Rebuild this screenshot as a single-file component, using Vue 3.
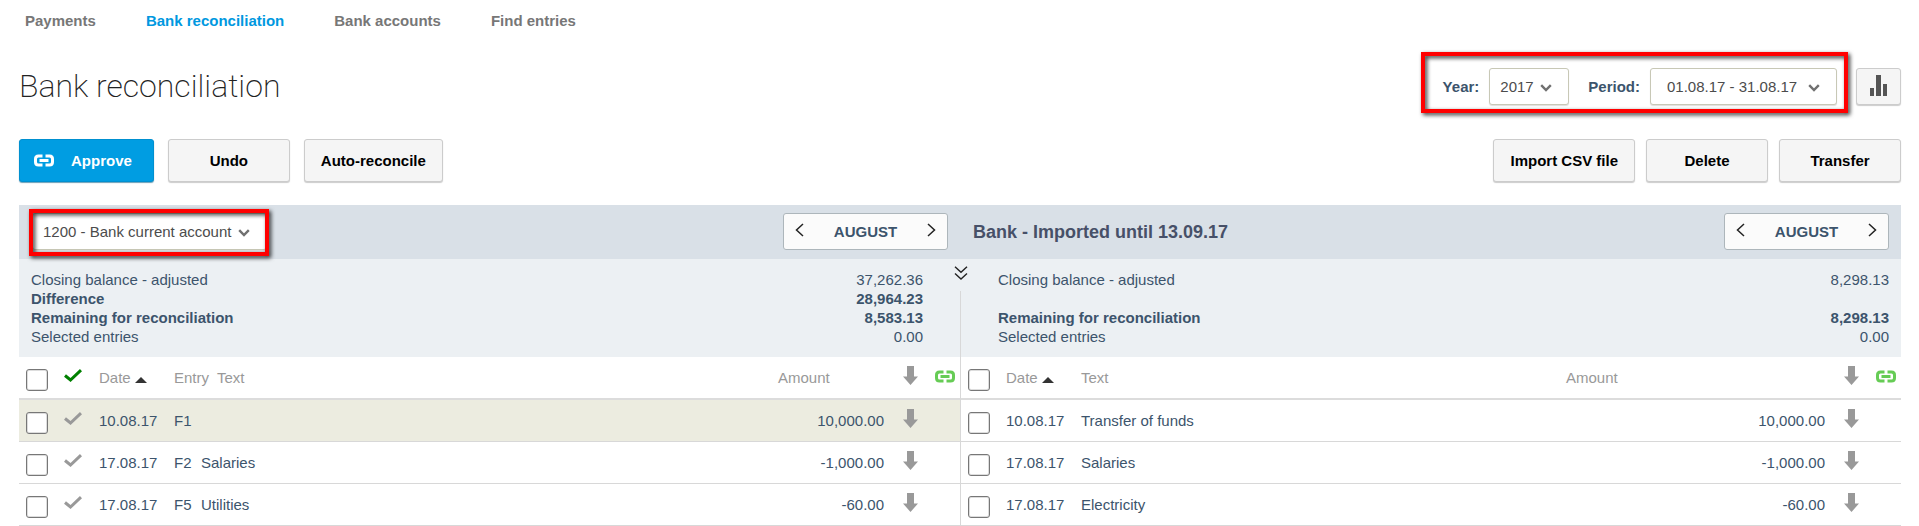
<template>
  <div class="page">
    <nav class="tabs">
      <a v-for="tab in tabs" :key="tab" href="#" :class="{ active: tab === activeTab }" @click.prevent="activeTab = tab">{{ tab }}</a>
    </nav>

    <header class="title_row">
      <h1>Bank reconciliation</h1>
      <div class="title_tools">
        <div class="filters marked">
          <label for="year">Year:</label>
          <span class="select_box">
            <select id="year" v-model="year">
              <option>2017</option>
            </select>
            <svg class="caret" viewBox="0 0 12 8"><path d="M1.2 1.2 6 6l4.800-4.800" /></svg>
          </span>
          <label for="period" class="period_label">Period:</label>
          <span class="select_box wide">
            <select id="period" v-model="period">
              <option>01.08.17 - 31.08.17</option>
            </select>
            <svg class="caret" viewBox="0 0 12 8"><path d="M1.2 1.2 6 6l4.800-4.800" /></svg>
          </span>
        </div>
        <button class="chart_btn" type="button" aria-label="Chart">
          <svg viewBox="0 0 18 21"><path d="M0 13h4v8H0zM6 0h5v21H6zM13 9h4v12h-4z" /></svg>
        </button>
      </div>
    </header>

    <div class="actions">
      <div class="actions_left">
        <button class="btn primary" type="button">
          <svg class="link_icon" viewBox="0 0 20 13">
            <path d="M8.500 2H4.500Q1.500 2 1.500 5v3q0 3 3 3h4M11.500 2h4q3 0 3 3v3q0 3-3 3h-4M5.500 6.500h9" />
          </svg>
          Approve
        </button>
        <button class="btn" type="button">Undo</button>
        <button class="btn" type="button">Auto-reconcile</button>
      </div>
      <div class="actions_right">
        <button class="btn" type="button">Import CSV file</button>
        <button class="btn" type="button">Delete</button>
        <button class="btn" type="button">Transfer</button>
      </div>
    </div>

    <main class="panes">
      <section v-for="pane in panes" :key="pane.id" class="pane" :class="pane.id">
        <div class="pane_head">
          <span v-if="pane.id === 'ledger'" class="select_box marked">
            <select v-model="account" aria-label="Account">
              <option>1200 - Bank current account</option>
            </select>
            <svg class="caret" viewBox="0 0 12 8"><path d="M1.2 1.2 6 6l4.800-4.800" /></svg>
          </span>
          <h2 v-else>Bank - Imported until 13.09.17</h2>
          <div class="pager">
            <button type="button" aria-label="Previous month">
              <svg viewBox="0 0 9 14"><path d="M8 1 1.500 7 8 13" /></svg>
            </button>
            <span>AUGUST</span>
            <button type="button" aria-label="Next month">
              <svg viewBox="0 0 9 14"><path d="M1 1l6.500 6L1 13" /></svg>
            </button>
          </div>
        </div>

        <div class="pane_body">
          <dl class="summary">
            <div v-for="(line, index) in pane.summary" :key="index" :class="{ strong: line.strong }">
              <dt>{{ line.label }}</dt>
              <dd>{{ line.value }}</dd>
            </div>
          </dl>

          <table>
            <colgroup>
              <col class="col_check">
              <col v-if="pane.id === 'ledger'" class="col_tick">
              <col class="col_date">
              <col v-if="pane.id === 'ledger'" class="col_entry">
              <col>
              <col class="col_amount">
              <col class="col_icon">
              <col class="col_icon">
            </colgroup>
            <thead>
              <tr>
                <th><input type="checkbox" aria-label="Select all"></th>
                <th v-if="pane.id === 'ledger'">
                  <svg class="tick approved" viewBox="0 0 18 13"><path d="M1 6.500 6.500 11 17 1.200" /></svg>
                </th>
                <th>
                  Date
                  <svg class="sort" viewBox="0 0 12 6"><path d="M0 6 6 0l6 6z" /></svg>
                </th>
                <th v-if="pane.id === 'ledger'" colspan="2"><span class="entry_title">Entry</span>Text</th>
                <th v-else>Text</th>
                <th>Amount</th>
                <th><svg class="arrow" viewBox="0 0 15 19"><path d="M4 0h7v10.500h4L7.500 19 0 10.500h4z" /></svg></th>
                <th>
                  <svg class="link_icon" viewBox="0 0 20 13">
                    <path d="M8.500 2H4.500Q1.500 2 1.500 5v3q0 3 3 3h4M11.500 2h4q3 0 3 3v3q0 3-3 3h-4M5.500 6.500h9" />
                  </svg>
                </th>
              </tr>
            </thead>
            <tbody>
              <tr v-for="(row, index) in pane.rows" :key="index" :class="{ current: row.current }">
                <td><input v-model="row.checked" type="checkbox" :aria-label="'Select ' + row.date + ' ' + row.amount"></td>
                <td v-if="pane.id === 'ledger'">
                  <svg class="tick" viewBox="0 0 18 13"><path d="M1 6.500 6.500 11 17 1.200" /></svg>
                </td>
                <td>{{ row.date }}</td>
                <td v-if="pane.id === 'ledger'">{{ row.entry }}</td>
                <td>{{ row.text }}</td>
                <td class="amount">{{ row.amount }}</td>
                <td><svg class="arrow" viewBox="0 0 15 19"><path d="M4 0h7v10.500h4L7.500 19 0 10.500h4z" /></svg></td>
                <td></td>
              </tr>
            </tbody>
          </table>
        </div>
      </section>

      <button class="collapse" type="button" aria-label="Toggle summary">
        <svg viewBox="0 0 14 14"><path d="M1 .800 7 6.300l6-5.500M1 7.500 7 13l6-5.500" /></svg>
      </button>
    </main>
  </div>
</template>

<script setup>
import {ref} from "vue";

const tabs = ['Payments', 'Bank reconciliation', 'Bank accounts', 'Find entries']
const activeTab = ref('Bank reconciliation')

const year = ref('2017')
const period = ref('01.08.17 - 31.08.17')
const account = ref('1200 - Bank current account')

const panes = ref([
  {
    id: 'ledger',
    summary: [
      {label: 'Closing balance - adjusted', value: '37,262.36'},
      {label: 'Difference', value: '28,964.23', strong: true},
      {label: 'Remaining for reconciliation', value: '8,583.13', strong: true},
      {label: 'Selected entries', value: '0.00'}
    ],
    rows: [
      {date: '10.08.17', entry: 'F1', text: '', amount: '10,000.00', current: true, checked: false},
      {date: '17.08.17', entry: 'F2', text: 'Salaries', amount: '-1,000.00', checked: false},
      {date: '17.08.17', entry: 'F5', text: 'Utilities', amount: '-60.00', checked: false}
    ]
  },
  {
    id: 'bank',
    // the second line stays empty so both summaries line up
    summary: [
      {label: 'Closing balance - adjusted', value: '8,298.13'},
      {label: '', value: ''},
      {label: 'Remaining for reconciliation', value: '8,298.13', strong: true},
      {label: 'Selected entries', value: '0.00'}
    ],
    rows: [
      {date: '10.08.17', text: 'Transfer of funds', amount: '10,000.00', checked: false},
      {date: '17.08.17', text: 'Salaries', amount: '-1,000.00', checked: false},
      {date: '17.08.17', text: 'Electricity', amount: '-60.00', checked: false}
    ]
  }
])
</script>

<style>
body {
  background: #fff;
}
</style>

<style scoped>
.page {
  padding: 11px 18px 0 19px;
  font-family: "Liberation Sans", Arial, sans-serif;
  font-size: 15px;
  line-height: 19px;
  color: #3c546c;
}
.page * {
  box-sizing: border-box;
}
button,
select {
  font: inherit;
}
svg {
  display: block;
}

.tabs {
  display: flex;
  gap: 50px;
  padding-left: 6px;
  font-weight: bold;
}
.tabs a {
  color: #777;
  text-decoration: none;
}
.tabs a.active {
  color: #0098e0;
}

.title_row {
  display: flex;
  justify-content: space-between;
  align-items: center;
  margin-top: 38px;
}
h1 {
  margin: 0;
  font-family: Roboto, "Open Sans", sans-serif;
  font-size: 32px;
  line-height: 37px;
  font-weight: 200;
  color: #222;
}
.title_tools {
  display: flex;
  gap: 19px;
}
.filters {
  display: flex;
  align-items: center;
}
.filters label {
  margin-right: 10px;
  font-weight: bold;
}
.filters .period_label {
  margin-left: 19px;
}

.select_box {
  position: relative;
  display: block;
}
.select_box select {
  display: block;
  height: 37px;
  padding: 0 34px 0 10px;
  appearance: none;
  color: #4c4c4c;
  background: #fff;
  border: 1px solid #c8c8b6;
  border-radius: 3px;
  box-shadow: 0 1px 1px #ddd;
}
.select_box.wide select {
  padding: 0 38px 0 16px;
}
.caret {
  position: absolute;
  top: 16px;
  right: 17px;
  width: 12px;
  height: 8px;
  fill: none;
  stroke: #707070;
  stroke-width: 2.4;
  pointer-events: none;
}

/* red frame drawn over a group of controls */
.marked {
  position: relative;
}
.marked::after {
  content: "";
  position: absolute;
  border: 4px solid #f00;
  filter: drop-shadow(2px 2px 2px rgba(0, 0, 0, 0.8));
  pointer-events: none;
}
.filters.marked::after {
  inset: -16px -11px -8px -22px;
}
.select_box.marked::after {
  inset: -4px -2px -6px -3px;
}

.chart_btn {
  display: flex;
  align-items: center;
  justify-content: center;
  width: 45px;
  height: 37px;
  padding: 0 0 2px;
  background: #f5f5f5;
  border: 1px solid #ccc;
  border-radius: 3px;
  box-shadow: 0 1px 1px #ccc;
}
.chart_btn svg {
  width: 18px;
  height: 21px;
  fill: #555;
}

.actions {
  display: flex;
  justify-content: space-between;
  margin-top: 34px;
}
.actions_left {
  display: flex;
  gap: 14px;
}
.actions_right {
  display: flex;
  gap: 11px;
}
.btn {
  min-width: 122px;
  height: 43px;
  padding: 0 16px;
  font-weight: bold;
  color: #000;
  background: #f5f5f5;
  border: 1px solid #ccc;
  border-radius: 3px;
  box-shadow: 0 1px 1px #ccc;
}
.btn.primary {
  display: flex;
  align-items: center;
  gap: 17px;
  padding: 0 21px 0 14px;
  color: #fff;
  background: #009de2;
  border-color: #0090d0;
  box-shadow: 0 1px 1px #6a9fb8;
}

.link_icon {
  width: 20px;
  height: 13px;
  fill: none;
  stroke: #6c5;
  stroke-width: 3;
}
.primary .link_icon {
  stroke: #fff;
}

.panes {
  position: relative;
  display: flex;
  margin-top: 23px;
}
.pane {
  flex: 1;
  min-width: 0;
}
.pane_head {
  display: flex;
  align-items: center;
  justify-content: space-between;
  padding: 8px 12px 9px 13px;
  background: #d9e0e7;
}
h2 {
  margin: 0;
  font-size: 18px;
  line-height: 22px;
  font-weight: bold;
  color: #475068;
}
.pager {
  display: flex;
  align-items: center;
  justify-content: space-between;
  width: 165px;
  height: 37px;
  font-weight: bold;
  background: #fbfbfb;
  border: 1px solid #adb6bb;
  border-radius: 3px;
}
.pager button {
  height: 35px;
  padding: 0 11px 4px;
  background: none;
  border: 0;
}
.pager svg {
  width: 9px;
  height: 14px;
  fill: none;
  stroke: #222;
  stroke-width: 1.5;
}

.bank .pane_body {
  border-left: 1px solid #d8d8d8;
}
.summary {
  margin: 0;
  padding: 11px 37px 11px 12px;
  background: #ecf0f3;
}
.bank .summary {
  padding: 11px 12px 11px 37px;
}
.summary div {
  display: flex;
  justify-content: space-between;
  height: 19px;
}
.summary .strong {
  font-weight: bold;
}
.summary dd {
  margin: 0;
}
.collapse {
  position: absolute;
  top: 54px;
  left: 50%;
  width: 28px;
  height: 32px;
  margin-left: -13px;
  padding: 0 7px 4px;
  background: #ecf0f3;
  border: 0;
}
.collapse svg {
  width: 14px;
  height: 14px;
  fill: none;
  stroke: #222;
  stroke-width: 1.4;
}

table {
  width: 100%;
  table-layout: fixed;
  border-collapse: separate;
  border-spacing: 0;
}
.col_check {
  width: 38px;
}
.col_tick {
  width: 35px;
}
.col_date {
  width: 75px;
}
.col_entry {
  width: 27px;
}
.col_amount {
  width: 125px;
}
.bank .col_amount {
  width: 278px;
}
.col_icon {
  width: 32px;
}
th,
td {
  height: 42px;
  padding: 0 0 0 7px;
  text-align: left;
  vertical-align: middle;
  white-space: nowrap;
  border-bottom: 1px solid #d8d8d8;
}
th {
  height: 43px;
  font-weight: normal;
  color: #999;
  border-bottom: 2px solid #dcdcdc;
}
.current td {
  background: #ecece0;
}
td.amount {
  padding-right: 12px;
  text-align: right;
}
.entry_title {
  margin-right: 8px;
}
input[type="checkbox"] {
  display: block;
  width: 22px;
  height: 22px;
  margin: 4px 0 0;
  appearance: none;
  background: #fff;
  border: 1px solid #777;
  border-radius: 3px;
  box-shadow: inset 0 0 0 1px #ddd;
}
input[type="checkbox"]:checked {
  background: #0098e0;
}
.tick {
  width: 18px;
  height: 13px;
  margin-bottom: 4px;
  fill: none;
  stroke: #999;
  stroke-width: 3;
}
.tick.approved {
  stroke: #008000;
}
.sort {
  display: inline-block;
  width: 12px;
  height: 6px;
  fill: #333;
}
.arrow {
  width: 15px;
  height: 19px;
  margin-bottom: 4px;
  fill: #999;
}
th .link_icon {
  margin-bottom: 2px;
}
</style>
